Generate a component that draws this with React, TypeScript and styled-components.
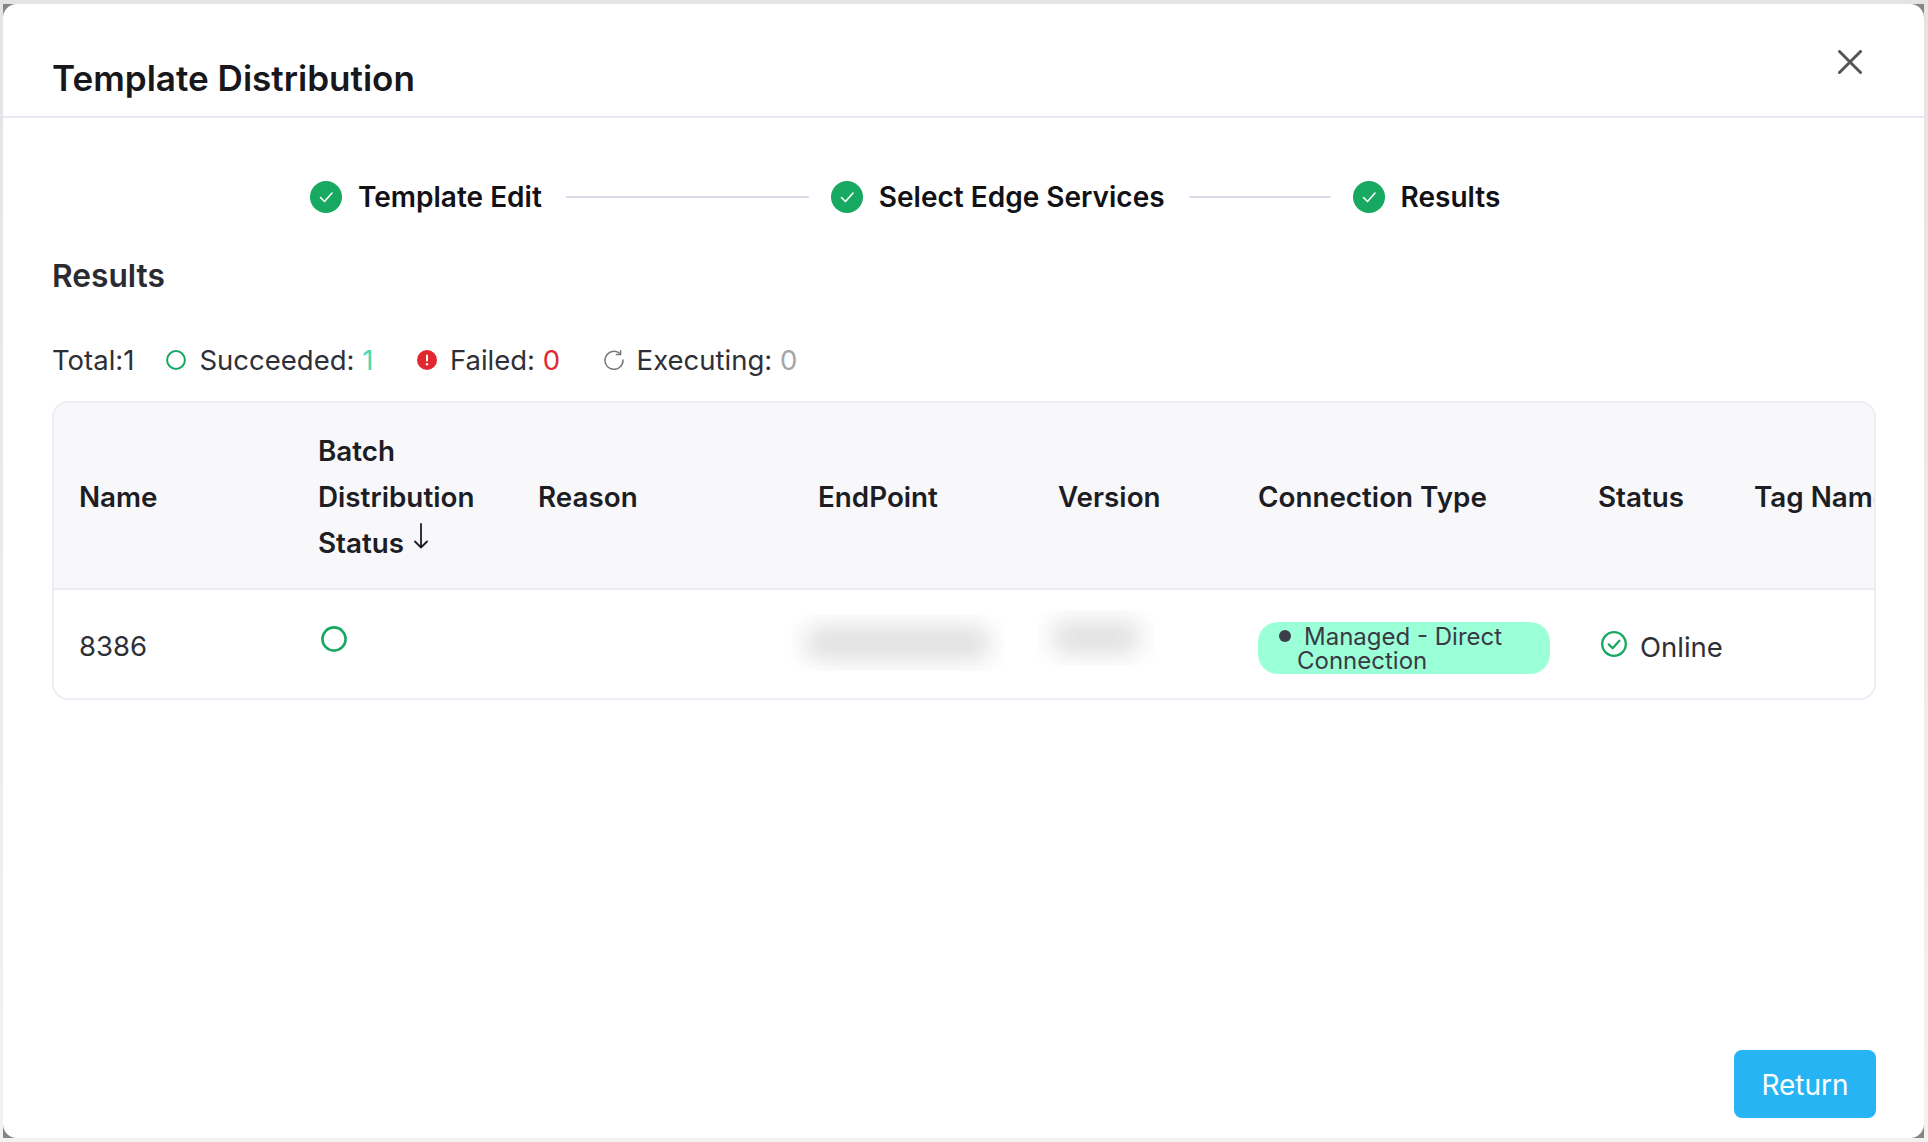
import React from 'react'
import styled, { createGlobalStyle } from 'styled-components'

const GlobalStyle = createGlobalStyle`
  html, body {
    margin: 0;
    padding: 0;
    background: #ececec;
    font-family: Inter, "Liberation Sans", sans-serif;
    -webkit-font-smoothing: antialiased;
  }
  * {
    box-sizing: border-box;
  }
`

const steps = [
  { title: 'Template Edit', line: 243 },
  { title: 'Select Edge Services', line: 142 },
  { title: 'Results', line: 0 },
]

const columns = [
  { title: 'Name', width: 239 },
  { title: 'Batch Distribution Status', width: 220, sortable: true },
  { title: 'Reason', width: 280 },
  { title: 'EndPoint', width: 240 },
  { title: 'Version', width: 200 },
  { title: 'Connection Type', width: 340 },
  { title: 'Status', width: 156 },
  { title: 'Tag Name', width: 200 },
]

const StepIcon = () => (
  <svg width="32" height="32" viewBox="0 0 32 32">
    <circle cx="16" cy="16" r="16" fill="#17a862" />
    <path d="M10.5 16.5l4 4 7.5-8.5" fill="none" stroke="#fff" strokeWidth="1.6" strokeLinecap="round" strokeLinejoin="round" />
  </svg>
)

const RingIcon = ({ size }: { size: number }) => (
  <svg width={size} height={size} viewBox="0 0 26 26">
    <circle cx="13" cy="13" r="11.6" fill="none" stroke="#17a862" strokeWidth="2.6" />
  </svg>
)

const FailedIcon = () => (
  <svg width="20" height="20" viewBox="0 0 20 20">
    <circle cx="10" cy="10" r="10" fill="#e0282e" />
    <rect x="9" y="4.5" width="2" height="7" rx="1" fill="#fff" />
    <circle cx="10" cy="14.2" r="1.2" fill="#fff" />
  </svg>
)

const ExecutingIcon = () => (
  <svg width="20" height="20" viewBox="0 0 20 20" fill="none" stroke="#77777d" strokeWidth="1.5" strokeLinecap="round" strokeLinejoin="round">
    <path d="M16.2 3.8A9 9 0 1 0 19 10" />
    <path d="M12.4 4.6h4.2V0.8" />
  </svg>
)

const OnlineIcon = () => (
  <svg width="26" height="26" viewBox="0 0 26 26" fill="none" stroke="#17a862" strokeLinecap="round" strokeLinejoin="round">
    <circle cx="13" cy="13" r="11.8" strokeWidth="2.3" />
    <path d="M7.8 13.4l3.8 3.8 6.8-7.4" strokeWidth="2.3" />
  </svg>
)

const SortArrow = () => (
  <svg width="14" height="26" viewBox="0 0 14 26" fill="none" stroke="#1d1d24" strokeWidth="1.8" strokeLinecap="round" strokeLinejoin="round">
    <path d="M7 1v23.5M1 18.5l6 6 6-6" />
  </svg>
)

export default function App() {
  return (
    <>
      <GlobalStyle />
      <Frame>
        <Backdrop>
          <Dialog>
            <Header>
              <Title>Template Distribution</Title>
              <CloseButton aria-label="Close">
                <svg width="24" height="24" viewBox="0 0 24 24" fill="none" stroke="#555" strokeWidth="3" strokeLinecap="round">
                  <path d="M1.5 1.5l21 21M22.5 1.5l-21 21" />
                </svg>
              </CloseButton>
            </Header>
            <Body>
              <Stepper>
                {steps.map((step) => (
                  <Step key={step.title}>
                    <StepIcon />
                    <StepTitle>{step.title}</StepTitle>
                    {step.line > 0 && <StepLine $width={step.line} />}
                  </Step>
                ))}
              </Stepper>
              <SectionTitle>Results</SectionTitle>
              <Stats>
                <span>Total:1</span>
                <Stat>
                  <RingIcon size={20} />
                  <StatLabel>
                    Succeeded: <StatValue $color="#4cd7ae">1</StatValue>
                  </StatLabel>
                </Stat>
                <Stat>
                  <FailedIcon />
                  <StatLabel>
                    Failed: <StatValue $color="#e0282e">0</StatValue>
                  </StatLabel>
                </Stat>
                <Stat>
                  <ExecutingIcon />
                  <StatLabel>
                    Executing: <StatValue $color="#a5a5a5">0</StatValue>
                  </StatLabel>
                </Stat>
              </Stats>
              <TableCard>
                <Table>
                  <colgroup>
                    {columns.map((col) => (
                      <col key={col.title} width={col.width} />
                    ))}
                  </colgroup>
                  <thead>
                    <tr>
                      {columns.map((col) => (
                        <HeadCell key={col.title}>
                          {col.title}
                          {col.sortable && (
                            <SortMark>
                              <SortArrow />
                            </SortMark>
                          )}
                        </HeadCell>
                      ))}
                    </tr>
                  </thead>
                  <tbody>
                    <tr>
                      <Cell>8386</Cell>
                      <Cell>
                        <RingWrap>
                          <RingIcon size={26} />
                        </RingWrap>
                      </Cell>
                      <Cell />
                      <Cell>
                        <BlurMask $width={213} $height={56} $left={-27} $top={-7}>
                          <BlurFill />
                        </BlurMask>
                      </Cell>
                      <Cell>
                        <BlurMask $width={116} $height={55} $left={-20} $top={-18}>
                          <BlurFill />
                        </BlurMask>
                      </Cell>
                      <Cell>
                        <ConnectionBadge>
                          <BadgeDot />
                          Managed - Direct Connection
                        </ConnectionBadge>
                      </Cell>
                      <Cell>
                        <Online>
                          <OnlineIcon />
                          <span>Online</span>
                        </Online>
                      </Cell>
                      <Cell />
                    </tr>
                  </tbody>
                </Table>
              </TableCard>
            </Body>
            <Footer>
              <ReturnButton>Return</ReturnButton>
            </Footer>
          </Dialog>
        </Backdrop>
      </Frame>
    </>
  )
}

const Frame = styled.div`
  height: 1142px;
  padding: 4px 4px 4px 3px;
  background: linear-gradient(#e4e4e4, #f2f2f2);
`

const Backdrop = styled.div`
  height: 100%;
  background: #858585;
`

const Dialog = styled.div`
  display: flex;
  flex-direction: column;
  height: 100%;
  background: #fff;
  border-radius: 14px;
  overflow: hidden;
`

const Header = styled.header`
  display: flex;
  justify-content: space-between;
  flex: none;
  height: 114px;
  padding: 46px 62px 0 49px;
  border-bottom: 2px solid #e9e8f4;
`

const Title = styled.h1`
  margin: 0;
  font-size: 35.1px;
  line-height: 56px;
  font-weight: 600;
  color: #17171c;
`

const CloseButton = styled.button`
  display: flex;
  align-self: flex-start;
  padding: 0;
  border: 0;
  background: none;
`

const Body = styled.main`
  flex: 1;
  padding: 63px 48px 0 49px;
`

const Stepper = styled.div`
  display: flex;
  align-items: center;
  padding-left: 258px;
`

const Step = styled.div`
  display: flex;
  align-items: center;
  gap: 16px;
`

const StepTitle = styled.span`
  font-size: 28px;
  line-height: 32px;
  font-weight: 600;
  color: #111116;
`

const StepLine = styled.i<{ $width: number }>`
  display: block;
  width: ${(p) => p.$width}px;
  height: 2px;
  margin: 0 22px 0 8px;
  background: #dcdcea;
`

const SectionTitle = styled.h2`
  margin: 41px 0 0;
  font-size: 31.7px;
  line-height: 44px;
  font-weight: 600;
  color: #2a2a31;
`

const Stats = styled.div`
  display: flex;
  align-items: center;
  gap: 32px;
  margin-top: 42px;
  font-size: 27.5px;
  line-height: 40px;
  color: #2f2f37;
`

const Stat = styled.div`
  display: flex;
  align-items: center;
  gap: 13px;
  margin-right: 11.5px;
`

const StatLabel = styled.span`
  white-space: pre;
`

const StatValue = styled.span<{ $color: string }>`
  color: ${(p) => p.$color};
`

const TableCard = styled.div`
  margin-top: 21px;
  border: 2px solid #eeedf5;
  border-radius: 16px;
  overflow: hidden;
`

const Table = styled.table`
  width: 1835px;
  table-layout: fixed;
  border-collapse: collapse;
`

const HeadCell = styled.th`
  height: 186px;
  padding: 2px 26px 0 25px;
  background: #f8f8fb;
  border-bottom: 2px solid #eeedf5;
  font-size: 27.8px;
  line-height: 46px;
  font-weight: 600;
  color: #1d1d24;
  text-align: left;
  white-space: normal;
`

const SortMark = styled.span`
  display: inline-block;
  margin-left: 10px;
  vertical-align: 4px;
  line-height: 0;
`

const Cell = styled.td`
  height: 109px;
  padding: 4px 0 0 25px;
  font-size: 27.5px;
  line-height: 40px;
  color: #2f2f37;
  vertical-align: middle;
`

const RingWrap = styled.span`
  display: block;
  line-height: 0;
  margin: -14px 0 0 3px;
`

const BlurMask = styled.div<{ $width: number; $height: number; $left: number; $top: number }>`
  width: ${(p) => p.$width}px;
  height: ${(p) => p.$height}px;
  margin: ${(p) => p.$top}px 0 0 ${(p) => p.$left}px;
  padding: 12px 14px;
  overflow: hidden;
`

const BlurFill = styled.div`
  height: 100%;
  background: #dedede;
  border-radius: 12px;
  filter: blur(12px);
`

const ConnectionBadge = styled.span`
  display: block;
  width: 292px;
  padding: 3px 20px 1px 39px;
  margin-top: 3px;
  background: #9bffd8;
  border-radius: 20px;
  font-size: 24px;
  line-height: 24px;
  color: #3a3a44;
  text-indent: -18px;
`

const BadgeDot = styled.i`
  display: inline-block;
  width: 12px;
  height: 12px;
  margin-right: 13px;
  border-radius: 50%;
  background: #3d3d4a;
  vertical-align: 3px;
`

const Online = styled.div`
  display: flex;
  align-items: center;
  gap: 13px;
  margin: 2px 0 0 3px;
  white-space: nowrap;

  svg {
    flex: none;
    margin-top: -6px;
  }
`

const Footer = styled.footer`
  display: flex;
  justify-content: flex-end;
  flex: none;
  padding: 0 48px 20px 0;
`

const ReturnButton = styled.button`
  width: 142px;
  height: 68px;
  padding: 2px 0 0;
  border: 0;
  border-radius: 8px;
  background: #27b4f5;
  font-family: inherit;
  font-size: 28px;
  color: #fff;
`
